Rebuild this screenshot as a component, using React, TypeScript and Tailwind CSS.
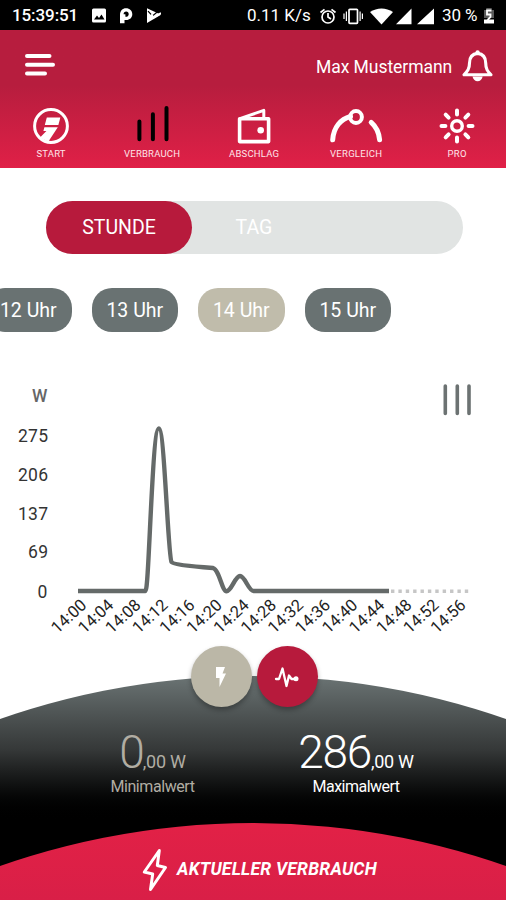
import type { ReactNode } from "react";

const tabs: { label: string; width: number; icon: ReactNode }[] = [
  {
    label: "START",
    width: 29,
    icon: (
      <>
        <circle cx="0" cy="2" r="16.4" fill="none" stroke="white" strokeWidth="3" />
        <path d="M-4.2-6.6H9.3L7.4.9H-6.2Z" fill="white" />
        <path d="M-6.6 3.2H6.8L-2.6 17.4L-11.2 13.8L-4.6 7H-7.6Z" fill="white" />
      </>
    ),
  },
  {
    label: "VERBRAUCH",
    width: 56,
    icon: (
      <path d="M-12.6-2.5V15.3M.9-9.8V15.3M14.5-16V15.3" stroke="black" strokeWidth="4" strokeLinecap="round" />
    ),
  },
  {
    label: "ABSCHLAG",
    width: 50,
    icon: (
      <>
        <path d="M-14.4-5.2H14.6V17.6H-14.4Z" fill="none" stroke="white" strokeWidth="3.6" strokeLinejoin="round" />
        <path d="M-13.4-5.6L9.8-13.6V-5.6" fill="none" stroke="white" strokeWidth="3" strokeLinejoin="round" />
        <circle cx="6.7" cy="6.2" r="3.3" fill="white" />
      </>
    ),
  },
  {
    label: "VERGLEICH",
    width: 52,
    icon: (
      <g fill="none" stroke="white" strokeLinecap="round">
        <path d="M-23.3 15.8C-22.5 3-15-5-5.5-7.6" strokeWidth="5" />
        <path d="M15.2-1.6C20.5 3 23 9 23.6 15.8" strokeWidth="5" />
        <circle cx="0" cy="-7" r="5.9" strokeWidth="4" />
      </g>
    ),
  },
  {
    label: "PRO",
    width: 19,
    icon: (
      <g fill="none" stroke="white" strokeLinecap="round">
        <circle cx="0" cy="2" r="5.3" strokeWidth="3.4" />
        <path
          d="M0-13.5V-9.6M0 13.6V17.5M-15.5 2H-11.6M11.6 2H15.5M-11.3-9.3L-8.4-6.4M8.4 10.4L11.3 13.3M-11.3 13.3L-8.4 10.4M8.4-6.4L11.3-9.3"
          strokeWidth="4"
        />
      </g>
    ),
  },
];

const hours = [
  { label: "12 Uhr", active: false },
  { label: "13 Uhr", active: false },
  { label: "14 Uhr", active: true },
  { label: "15 Uhr", active: false },
];

const yTicks = [
  { label: "275", y: 436, x: 18, width: 30 },
  { label: "206", y: 474.5, x: 18, width: 30 },
  { label: "137", y: 513.5, x: 18, width: 30 },
  { label: "69", y: 552, x: 28, width: 20 },
  { label: "0", y: 591.5, x: 37.5, width: 10 },
];

const xTicks = [
  "14:00", "14:04", "14:08", "14:12", "14:16", "14:20", "14:24", "14:28",
  "14:32", "14:36", "14:40", "14:44", "14:48", "14:52", "14:56",
];

function StatusBar() {
  return (
    <div className="flex h-[30px] shrink-0 items-center bg-black pt-0.5 pl-3 text-white">
      <span className="w-[66px] text-[17px] font-medium tracking-[-0.1px] whitespace-nowrap">15:39:51</span>
      <svg className="ml-[13px]" width="70" height="18" viewBox="0 0 70 18">
        <rect x="1" y="1.5" width="14" height="14" rx="1.5" fill="white" />
        <path d="M3 12.5L6 8.5L8 11L10.5 7.5L13.5 12.5Z" fill="black" />
        <path
          d="M29 16.2V8C29 4 31.5 1.3 35 1.3C38.7 1.3 41.3 3.8 41.3 7.2C41.3 10.6 38.7 13 35.3 13H33.5V16.2ZM35.2 4.6C33.6 4.6 32.6 5.7 32.6 7.2H34.4V9.8C36.3 9.9 37.7 8.9 37.7 7.2C37.7 5.7 36.7 4.6 35.2 4.6Z"
          fill="white"
          fillRule="evenodd"
        />
        <path d="M56 1.2L70 7.8L56 16Z" fill="white" />
        <path d="M57 4.2L61.5 9L68 3.5" fill="none" stroke="black" strokeWidth="1.2" />
        <path d="M60 7.5L62.5 10.5L70 6" fill="none" stroke="white" strokeWidth="2" />
      </svg>
      <span className="ml-[86px] w-[66px] text-[17px] whitespace-nowrap">0.11 K/s</span>
      <svg className="ml-[6px]" width="116" height="20" viewBox="319 5 116 20">
        <g fill="none" stroke="white" strokeWidth="1.7">
          <circle cx="328" cy="16" r="6" />
          <path d="M328 12V16L331 18M320.5 11.5L324.5 8.3M335.5 11.5L331.5 8.3" />
          <rect x="349" y="8.3" width="8.5" height="14" rx="0.8" />
          <path d="M346.4 10.5V20M360.1 10.5V20M344 12.5V18M362.4 12.5V18" strokeWidth="1.2" />
        </g>
        <path d="M370 11C377 6.3 386 6.3 393 11L381.5 23.5Z" fill="white" />
        <path d="M396 23.2L411.5 7.5V23.2ZM417 23.2L434 7.5V23.2Z" fill="white" />
      </svg>
      <span className="ml-[7px] w-[36px] text-[17px] tracking-[-0.1px] whitespace-nowrap">30 %</span>
      <svg className="ml-[5px]" width="12" height="18" viewBox="0 0 12 18">
        <path d="M3.3 1H8.7V3H11V11H1V3H3.3Z" fill="#5b5b5b" />
        <path d="M1 12.5H11V16.5H1Z" fill="white" />
        <path d="M8.5 3.5H4V7.5H7.5V10L4.5 13" fill="none" stroke="white" strokeWidth="1.8" />
      </svg>
    </div>
  );
}

function Header() {
  return (
    <header className="flex h-[138px] shrink-0 flex-col bg-linear-to-b from-[#b71d3e] from-40% to-[#e02047] text-white">
      <div className="flex h-[72px] items-center justify-between pr-3 pl-[25px]">
        <svg className="-mt-[3px]" width="31" height="24" viewBox="0 0 31 24">
          <path d="M2 3H24.5M2 11.8H28M2 20.6H20" stroke="white" strokeWidth="4" strokeLinecap="round" />
        </svg>
        <div className="flex items-center gap-[8px]">
          <span className="w-[137px] pt-[3px] text-[17.5px] tracking-[-0.05px] whitespace-nowrap">Max Mustermann</span>
          <svg width="33" height="34" viewBox="0 0 33 34">
            <path
              d="M16.6 4.4C11 5 8.5 9 8.5 14C8.5 20 6.5 22.3 3 25.8H30C26.6 22.3 24.7 20 24.7 14C24.7 9 22.2 5 16.6 4.4Z"
              fill="none"
              stroke="white"
              strokeWidth="3.1"
              strokeLinejoin="round"
            />
            <circle cx="16.6" cy="3.4" r="2.2" fill="white" />
            <path d="M11.5 27.5H21.7C21 30.7 19 32.3 16.6 32.3S12.2 30.7 11.5 27.5Z" fill="white" />
          </svg>
        </div>
      </div>
      <nav className="-mr-[2px] grid h-[66px] grid-cols-5">
        {tabs.map((tab) => (
          <div key={tab.label} className="flex flex-col items-center">
            <svg width="60" height="44" viewBox="-30 -22 60 44">
              {tab.icon}
            </svg>
            <svg width="70" height="14" viewBox="-35 0 70 14">
              <text
                x="0"
                y="10.8"
                textAnchor="middle"
                textLength={tab.width}
                className="fill-[#ffe4ea] font-['Roboto',sans-serif] text-[9.5px]"
              >
                {tab.label}
              </text>
            </svg>
          </div>
        ))}
      </nav>
    </header>
  );
}

function Chart() {
  return (
    <svg className="shrink-0" width="506" height="272" viewBox="0 376 506 272">
      <text x="32" y="402" textLength="16" className="fill-[#666] font-['Roboto',sans-serif] text-[17.5px] font-medium">
        W
      </text>
      {yTicks.map((tick) => (
        <text
          key={tick.label}
          x={tick.x}
          y={tick.y + 6}
          textLength={tick.width}
          className="fill-[#333] font-['Roboto',sans-serif] text-[17.5px]"
        >
          {tick.label}
        </text>
      ))}
      <path d="M445.3 386V413.5M457.3 386V413.5M469 386V413.5" stroke="#6c7272" strokeWidth="3.6" strokeLinecap="round" />
      <path
        d="M78 591H145.5C149 591 152 428.5 158.8 428.5C164.5 428.5 168 556 171.5 562C172.5 564 186 566 213 568C219.5 570 222 591.3 226.5 591.3C231.5 591.3 235 576 240 576C245 576 248.5 591 253.5 591H389"
        fill="none"
        stroke="#656a69"
        strokeWidth="4.4"
      />
      <path d="M391 591.2H469" stroke="#c6c6c6" strokeWidth="3.4" strokeDasharray="3.4 3.98" />
      {xTicks.map((label, i) => (
        <text
          key={label}
          transform={`translate(${87.5 + i * 27.1} 606.3) rotate(-43)`}
          textAnchor="end"
          textLength="41"
          className="fill-[#222] font-['Roboto',sans-serif] text-[16.5px]"
        >
          {label}
        </text>
      ))}
    </svg>
  );
}

function Summary() {
  return (
    <footer className="flex h-[224px] shrink-0 flex-col bg-linear-to-b from-[#6b7474] via-[#353838] via-33% to-black to-66% [clip-path:circle(766px_at_50%_766px)]">
      <div className="flex h-[147px] shrink-0 pt-[53px] leading-none">
        <div className="flex w-[305px] flex-col items-center text-[#b1ada3]">
          <div className="flex h-[43px] items-baseline whitespace-nowrap">
            <span className="text-[46px] leading-[46px] font-light tracking-[-2px]">0</span>
            <span className="text-[18px] tracking-[-0.2px]">,00 W</span>
          </div>
          <div className="pt-[6px] text-[16px] leading-[18px] tracking-[-0.42px]">Minimalwert</div>
        </div>
        <div className="flex w-[102px] flex-col items-center text-white">
          <div className="flex h-[43px] items-baseline whitespace-nowrap">
            <span className="text-[46px] leading-[46px] font-light tracking-[-1.3px]">286</span>
            <span className="text-[18px] tracking-[-0.3px]">,00 W</span>
          </div>
          <div className="pt-[6px] text-[16px] leading-[18px] tracking-[-0.52px]">Maximalwert</div>
        </div>
      </div>
      <div className="flex h-[77px] items-center bg-linear-to-b from-[#e22146] to-[#d91f47] pt-[16px] pl-[141px] text-white [clip-path:circle(766px_at_50%_766px)]">
        <svg width="28" height="46" viewBox="0 0 28 46">
          <path
            d="M18.3 3.5L3.3 25L11.7 27L9.5 42.5L24.5 20.5L16.3 18.5Z"
            fill="none"
            stroke="white"
            strokeWidth="3"
            strokeLinejoin="round"
          />
        </svg>
        <span className="ml-2 text-[17.5px] font-bold tracking-[0.24px] whitespace-nowrap italic">AKTUELLER VERBRAUCH</span>
      </div>
    </footer>
  );
}

export default function App() {
  return (
    <div className="flex h-[900px] w-[506px] flex-col overflow-hidden bg-white font-['Roboto',sans-serif]">
      <StatusBar />
      <Header />
      <div className="mt-[33px] ml-[46px] flex h-[53px] w-[417px] shrink-0 rounded-full bg-[#e1e4e3] text-[19.5px] text-white">
        <div className="flex w-[146px] items-center justify-center rounded-full bg-[#b71a3c] pt-px">STUNDE</div>
        <div className="flex w-[124px] items-center justify-center pt-px">TAG</div>
      </div>
      <div className="mt-[34px] -ml-[15px] flex h-[44px] shrink-0 gap-5">
        {hours.map((hour) => (
          <div
            key={hour.label}
            className={`flex w-[86.5px] items-center justify-center rounded-[20px] pt-[2px] text-[19.5px] whitespace-nowrap text-white ${
              hour.active ? "bg-[#c0bcab]" : "bg-[#697272]"
            }`}
          >
            {hour.label}
          </div>
        ))}
      </div>
      <div className="h-[44px] shrink-0" />
      <Chart />
      <div className="relative z-10 -mt-[2px] -mb-[31px] ml-[190.5px] flex h-[61px] shrink-0 gap-[5px]">
        <div className="flex size-[61px] items-center justify-center rounded-full bg-[#bbb7a7] shadow-[0_3px_5px_rgba(0,0,0,0.3)]">
          <svg width="12" height="22" viewBox="0 0 12 22">
            <path d="M1 1H10L7.5 7.5H11L4.5 21V12H1Z" fill="white" />
          </svg>
        </div>
        <div className="flex size-[61px] items-center justify-center rounded-full bg-[#b71a3c] shadow-[0_3px_5px_rgba(0,0,0,0.3)]">
          <svg width="26" height="24" viewBox="0 0 26 24">
            <path
              d="M2 14H5L8.5 3.5L12.5 21L15 10.5L17.5 14H21"
              fill="none"
              stroke="white"
              strokeWidth="2.3"
              strokeLinejoin="round"
              strokeLinecap="round"
            />
            <circle cx="22" cy="13.7" r="2.5" fill="white" />
          </svg>
        </div>
      </div>
      <Summary />
    </div>
  );
}
